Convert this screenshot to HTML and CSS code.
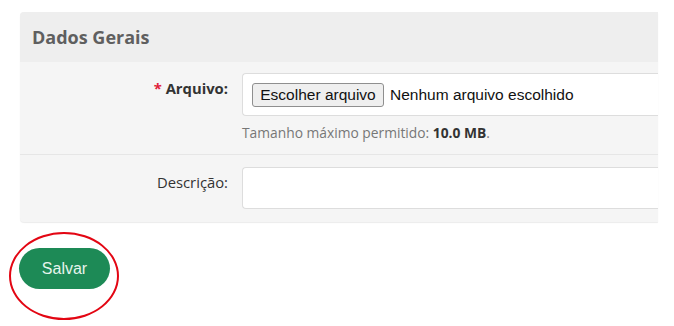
FILE: index.html
```html
<!DOCTYPE html>
<html lang="pt-BR">
<head>
    <meta charset="UTF-8">
    <meta name="viewport" content="width=device-width, initial-scale=1.0">
    <title>Enviar Arquivo</title>
    <link rel="stylesheet" href="styles.css">
</head>
<body>
    <div class="page">
        <div class="panel">
            <div class="panel-heading">Dados Gerais</div>
            <div class="panel-body">
                <div class="form-row">
                    <label class="form-label bold"><span class="req">*</span> Arquivo:</label>
                    <div class="form-field">
                        <div class="input-box file-box">
                            <span class="file-btn">Escolher arquivo</span>
                            <span class="file-name">Nenhum arquivo escolhido</span>
                        </div>
                        <p class="help">Tamanho máximo permitido: <strong>10.0 MB</strong>.</p>
                    </div>
                </div>
                <div class="form-row">
                    <label class="form-label" for="descricao">Descrição:</label>
                    <div class="form-field">
                        <input class="input-box" type="text" id="descricao">
                    </div>
                </div>
            </div>
        </div>

        <div class="actions">
            <button type="submit" class="btn-salvar">Salvar</button>
            <!-- highlight drawn over the button -->
            <span class="mark"></span>
        </div>
    </div>
</body>
</html>
```

FILE: styles.css
```css
* {
    box-sizing: border-box;
    margin: 0;
    padding: 0;
}

html, body {
    min-height: 326px;
}

body {
    font-family: 'Open Sans', sans-serif;
    background: #ffffff;
    color: #333333;
}

.page {
    padding: 12px 0 40px 20px;
    width: 658px;
}

/* Panel */
.panel {
    background-color: #f5f5f5;
    border-radius: 4px 0 0 4px;
    box-shadow: 0 1px 1px rgba(0, 0, 0, 0.08);
    overflow: hidden;
}

.panel-heading {
    height: 50px;
    line-height: 50px;
    padding-left: 12px;
    background-color: #eeeeee;
    color: #5f5f5f;
    font-size: 18px;
    font-weight: 700;
}

/* Form rows */
.form-row {
    display: flex;
    padding: 11px 0 12px;
}

.form-row + .form-row {
    border-top: 1px solid #e6e6e6;
    padding-top: 12px;
    padding-bottom: 13px;
}

.form-label {
    width: 222px;
    padding: 5px 14px 0 0;
    text-align: right;
    font-size: 14.8px;
    line-height: 20px;
    color: #333333;
}

.form-label.bold {
    font-weight: 700;
}

.req {
    color: #e0223a;
}

.form-field {
    flex: 1;
}

.input-box {
    display: block;
    width: 100%;
    height: 42px;
    background: #ffffff;
    border: 1px solid #dddddd;
    border-right: none;
    border-radius: 4px 0 0 4px;
}

.file-box {
    display: flex;
    align-items: center;
    height: 43px;
    padding-left: 9px;
    font-family: 'Liberation Sans', Arial, sans-serif;
    font-size: 15.5px;
    color: #111111;
}

.file-btn {
    width: 132px;
    height: 24px;
    line-height: 22px;
    text-align: center;
    background: #efefef;
    border: 1px solid #8f8f8f;
    border-radius: 3px;
}

.file-name {
    margin-left: 6px;
}

.help {
    margin-top: 8px;
    font-size: 13.8px;
    line-height: 18px;
    color: #777777;
}

.help strong {
    color: #333333;
}

/* Save button */
.actions {
    position: relative;
    padding-top: 26px;
    margin-left: -1px;
}

.btn-salvar {
    width: 91px;
    height: 41px;
    background-color: #1d8a56;
    color: #e6f4ec;
    font-family: 'Liberation Sans', Arial, sans-serif;
    font-size: 16px;
    border: none;
    border-radius: 21px;
}

.mark {
    position: absolute;
    left: -10px;
    top: 10px;
    width: 110px;
    height: 88px;
    border: 2px solid #e30613;
    border-radius: 50%;
}
```
